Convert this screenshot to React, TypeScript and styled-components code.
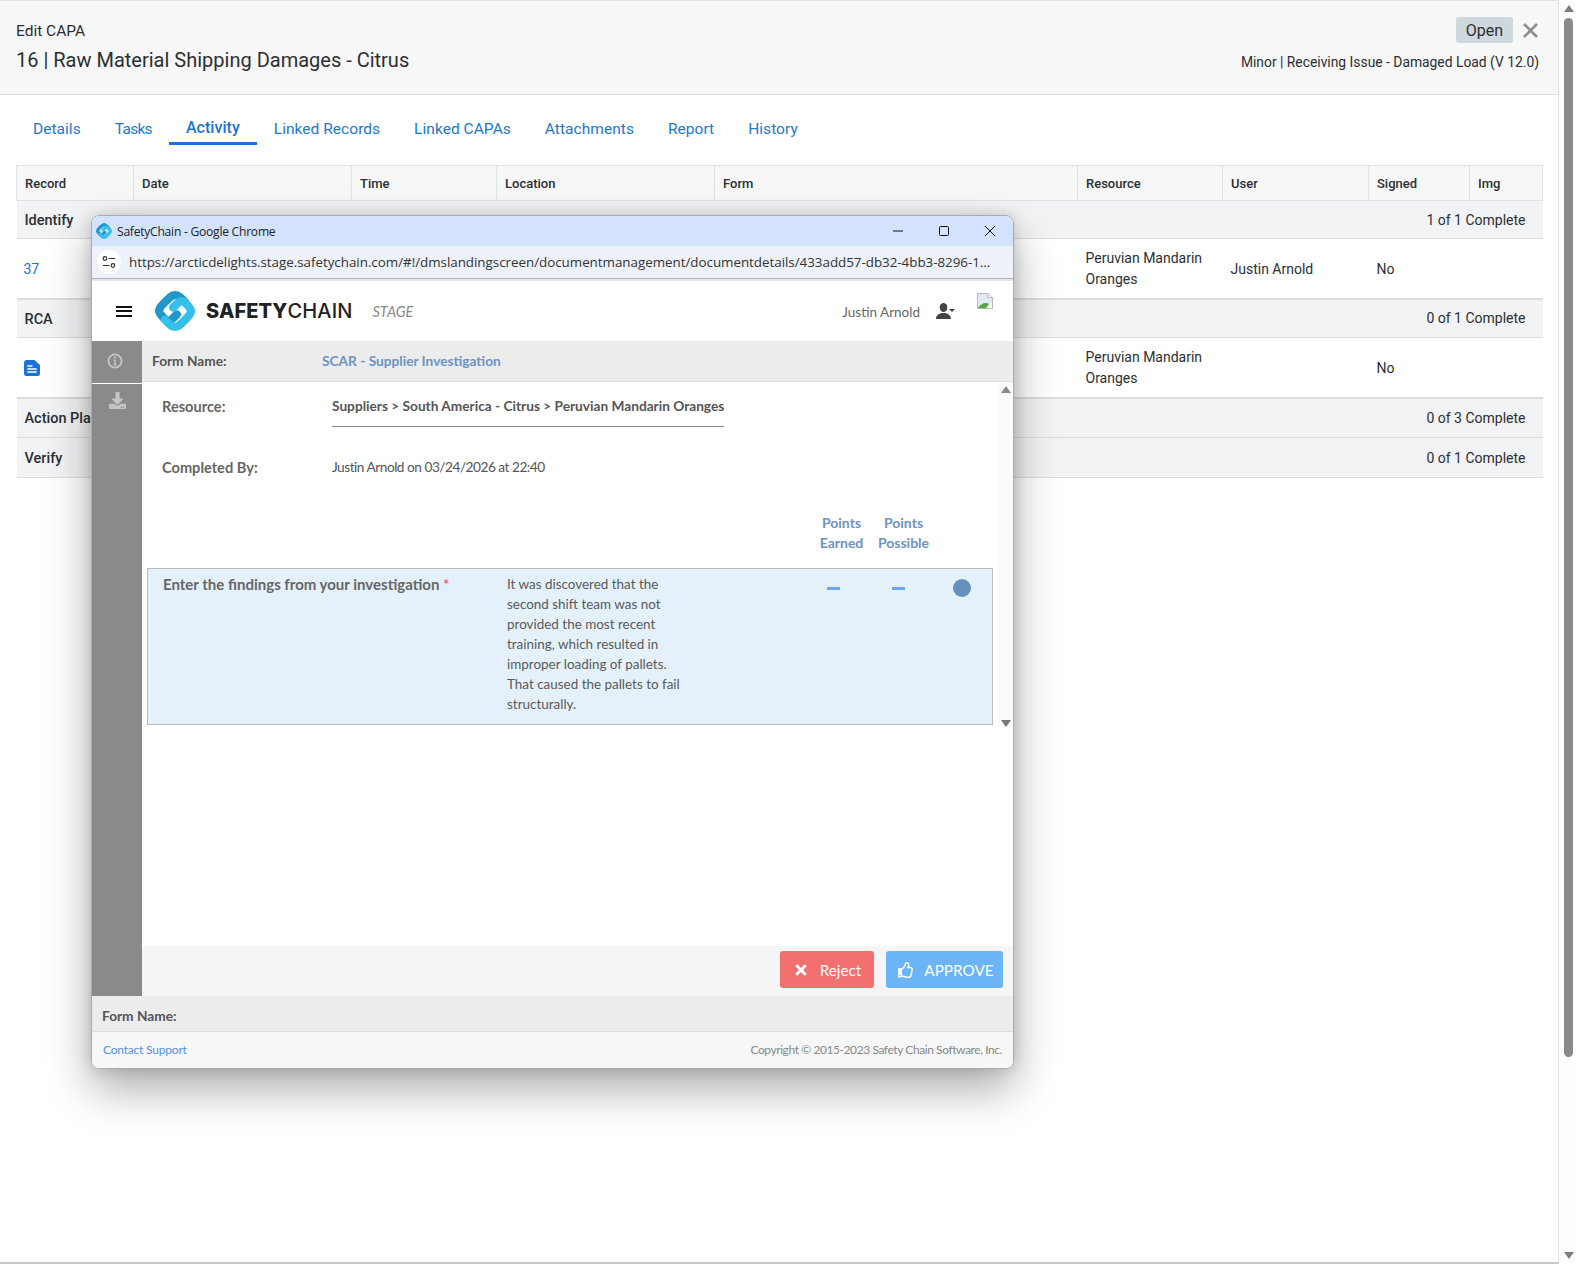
import React from "react";
import styled, { createGlobalStyle } from "styled-components";
import { FaDownload, FaRegThumbsUp, FaTimes } from "react-icons/fa";

const Global = createGlobalStyle`
  html, body { margin: 0; padding: 0; background: #fff; overflow: hidden; }
  body { font-family: Roboto, "Liberation Sans", sans-serif; color: #2b2f33; }
  * { box-sizing: border-box; }
`;

const Page = styled.div`
  display: flex;
  width: 1576px;
  height: 1264px;
  position: relative;
  overflow: hidden;
`;
const Main = styled.main`
  flex: 1;
  min-width: 0;
  border-right: 1px solid #e4e4e4;
  border-bottom: 2px solid #c9c9c9;
`;
const PageBar = styled.div`
  width: 17px;
  display: flex;
  flex-direction: column;
  align-items: center;
  background: #fdfdfd;
  padding: 5px 0 5px 2px;
`;
const Arrow = styled.div<{ $down?: boolean; $color?: string }>`
  width: 0;
  height: 0;
  border-left: 5px solid transparent;
  border-right: 5px solid transparent;
  ${(p) => (p.$down ? "border-top" : "border-bottom")}: 7px solid ${(p) => p.$color || "#7d7d7d"};
`;
const PageThumb = styled.div`
  width: 9px;
  height: 1039px;
  margin-top: 6px;
  margin-bottom: auto;
  background: #8a8a8a;
  border-radius: 5px;
`;
const Header = styled.header`
  height: 95px;
  background: #f7f7f7;
  border-top: 1px solid #e2e2e2;
  border-bottom: 1px solid #dedede;
  padding: 0 19px 0 16px;
  display: flex;
  justify-content: space-between;
`;
const HeadLeft = styled.div`
  display: flex;
  flex-direction: column;
  padding-top: 20px;
`;
const Eyebrow = styled.div`
  font-size: 15.5px;
  line-height: 20px;
`;
const Title = styled.h1`
  margin: 7px 0 0;
  font-size: 20px;
  line-height: 24px;
  font-weight: 400;
`;
const HeadRight = styled.div`
  display: flex;
  flex-direction: column;
  align-items: flex-end;
  padding-top: 16px;
`;
const StatusRow = styled.div`
  display: flex;
  align-items: center;
  gap: 10px;
`;
const Status = styled.span`
  width: 57px;
  height: 26px;
  background: #cfd8dd;
  border-radius: 3px;
  font-size: 16px;
  line-height: 27px;
  text-align: center;
`;
const CloseBtn = styled.span`
  display: flex;
  color: #8d8d8d;
  margin-right: 1px;
`;
const Meta = styled.div`
  margin-top: 9px;
  font-size: 13.85px;
  line-height: 20px;
`;
const Tabs = styled.nav`
  display: flex;
  padding: 23px 0 0 16px;
  height: 70px;
`;
const Tab = styled.a<{ $active?: boolean; $tight?: boolean }>`
  height: 27px;
  padding: 0 17px;
  font-size: ${(p) => (p.$active ? "16px" : "15.5px")};
  line-height: 22px;
  letter-spacing: ${(p) => (p.$tight ? "-0.7px" : "0.04px")};
  color: ${(p) => (p.$active ? "#1a73d4" : "#2378cc")};
  font-weight: ${(p) => (p.$active ? 500 : 400)};
  ${(p) => p.$active && "border-bottom: 3px solid #1a73d4; margin-top: -1px; height: 28px;"}
`;
const TableWrap = styled.div`
  padding-left: 16px;
`;
const Table = styled.table`
  width: 1526px;
  table-layout: fixed;
  border-collapse: collapse;
  font-size: 14px;
`;
const Th = styled.th`
  height: 35px;
  padding: 1px 8px 0;
  background: #f7f7f7;
  border: 1px solid #dee2e6;
  font-size: 13px;
  font-weight: 500;
  text-align: left;
`;
const GroupRow = styled.tr<{ $h: number }>`
  height: ${(p) => p.$h}px;
  background: #f2f3f5;
  border-bottom: 1px solid #dcdcdc;
`;
const GroupName = styled.td`
  padding: 2px 8px 0;
  font-weight: 500;
  font-size: 14.5px;
`;
const GroupCount = styled.td`
  padding: 0 17px 0 8px;
  text-align: right;
`;
const DataRow = styled.tr<{ $h: number }>`
  height: ${(p) => p.$h}px;
  border-bottom: 2px solid #dcdcdc;
`;
const Td = styled.td`
  padding: 2px 8px 0;
  line-height: 21px;
  vertical-align: middle;
`;
const RecordCell = styled(Td)`
  padding-left: 7px;
`;
const RecordLink = styled.a`
  color: #1a73d4;
`;

const Win = styled.section`
  position: absolute;
  left: 91px;
  top: 215px;
  width: 923px;
  height: 854px;
  display: flex;
  flex-direction: column;
  border: 1px solid #ababab;
  border-radius: 8px;
  overflow: hidden;
  background: #fff;
`;
const WinShadow = styled.div`
  position: absolute;
  left: 91px;
  top: 215px;
  width: 923px;
  height: 854px;
  border-radius: 8px;
  box-shadow: 0 20px 45px rgba(0, 0, 0, 0.33), 0 0 14px rgba(0, 0, 0, 0.14);
`;
const TitleBar = styled.div`
  height: 30px;
  flex: none;
  background: #d3e3fd;
  display: flex;
  align-items: center;
  padding: 0 18px 0 4px;
  font-size: 12.1px;
  font-family: "Open Sans", sans-serif;
  letter-spacing: -0.25px;
  color: #222;
`;
const TitleText = styled.span`
  margin-left: 5px;
  flex: 1;
`;
const WinControls = styled.div`
  display: flex;
  align-items: center;
  gap: 36px;
`;
const UrlBar = styled.div`
  height: 33px;
  flex: none;
  background: #edf2fa;
  border-bottom: 1px solid #b4b4b4;
  display: flex;
  align-items: center;
  padding: 0 0 0 5px;
  font-size: 13.4px;
  font-family: "Open Sans", sans-serif;
  letter-spacing: -0.03px;
  color: #333;
  white-space: nowrap;
`;
const SiteInfo = styled.span`
  width: 24px;
  height: 24px;
  flex: none;
  border-radius: 50%;
  background: #fff;
  display: flex;
  align-items: center;
  justify-content: center;
  margin-right: 8px;
`;
const UrlLine = styled.div`
  height: 2px;
  flex: none;
  background: #e3e5e8;
`;
const AppHeader = styled.div`
  height: 60px;
  flex: none;
  display: flex;
  align-items: center;
  padding: 0 20px 0 24px;
  background: #fff;
`;
const Burger = styled.span`
  width: 16px;
  height: 11px;
  border-top: 2px solid #111;
  border-bottom: 2px solid #111;
  position: relative;
  margin-right: 23px;
  &::after {
    content: "";
    position: absolute;
    left: 0;
    right: 0;
    top: 2.5px;
    height: 2px;
    background: #111;
  }
`;
const Brand = styled.span`
  margin-left: 11px;
  font-family: Inter, sans-serif;
  font-size: 20px;
  font-weight: 800;
  color: #222;
  letter-spacing: 0.13px;
`;
const BrandLight = styled.span`
  font-weight: 500;
`;
const Stage = styled.span`
  margin-left: 20px;
  font-family: Lato, sans-serif;
  font-style: italic;
  font-size: 14.5px;
  color: #8a8a8a;
  flex: 1;
`;
const UserName = styled.span`
  font-family: Lato, sans-serif;
  font-size: 13.5px;
  color: #666;
  margin: 2px 16px 0 0;
`;
const UserIcon = styled.span`
  display: flex;
  margin: 0 22px 0 0;
`;
const BrokenImg = styled.span`
  display: flex;
  align-self: flex-start;
  margin-top: 12px;
`;
const Body = styled.div`
  flex: 1;
  min-height: 0;
  display: flex;
  font-family: Lato, sans-serif;
  font-size: 13.7px;
  color: #555;
`;
const Side = styled.aside`
  width: 50px;
  flex: none;
  background: #8a8a8c;
  display: flex;
  flex-direction: column;
`;
const SideCell = styled.div<{ $line?: boolean }>`
  height: 43px;
  display: flex;
  justify-content: center;
  align-items: center;
  color: #c4c4c4;
  ${(p) => p.$line && "border-bottom: 1px solid #fff; padding: 0 4px 2px 0;"}
`;
const Content = styled.div`
  flex: 1;
  min-width: 0;
  display: flex;
  flex-direction: column;
`;
const FormRow = styled.div`
  height: 41px;
  flex: none;
  background: #ececec;
  border-bottom: 1px solid #dedede;
  display: flex;
  align-items: center;
  padding: 0 0 2px 10px;
  font-weight: 700;
`;
const FormLabel = styled.span`
  width: 170px;
  color: #555;
`;
const FormValue = styled.span`
  color: #6b93c3;
`;
const ScrollArea = styled.div`
  flex: 1;
  min-height: 0;
  display: flex;
  position: relative;
`;
const Scrolled = styled.div`
  flex: 1;
  min-width: 0;
  padding: 15px 0 0 5px;
`;
const ScrollRail = styled.div`
  width: 15px;
  height: 345px;
  flex: none;
  display: flex;
  flex-direction: column;
  justify-content: space-between;
  align-items: center;
  padding: 4px 0 0;
  background: #fbfbfb;
`;
const InfoRow = styled.div<{ $h: number }>`
  display: flex;
  height: ${(p) => p.$h}px;
  padding-left: 15px;
`;
const InfoLabel = styled.div`
  width: 170px;
  font-size: 14.6px;
  font-weight: 700;
  color: #666;
  line-height: 20px;
`;
const ResourceValue = styled.div`
  height: 30px;
  border-bottom: 1px solid #888;
  font-weight: 700;
  line-height: 18px;
`;
const PlainValue = styled.div`
  line-height: 18px;
  letter-spacing: -0.5px;
`;
const PointsHead = styled.div`
  display: flex;
  height: 55px;
  padding-left: 671px;
  gap: 15px;
`;
const PointsCol = styled.div`
  width: 47px;
  font-size: 14px;
  text-align: center;
  color: #6b93c3;
  font-weight: 700;
  line-height: 20px;
  white-space: nowrap;
  display: flex;
  justify-content: center;
`;
const Field = styled.div`
  width: 846px;
  height: 157px;
  background: #e4f1fb;
  border: 1px solid #bbb;
  display: flex;
  padding: 6px 0 0 15px;
`;
const FieldLabel = styled.div`
  width: 344px;
  margin-top: -1px;
  font-size: 15px;
  font-weight: 700;
  line-height: 20px;
  color: #666;
  white-space: nowrap;
`;
const Req = styled.span`
  color: #ee6b6b;
`;
const Answer = styled.div`
  width: 180px;
  margin-top: -1px;
  font-size: 13.45px;
  line-height: 20px;
  white-space: pre-line;
  color: #5a5a5a;
`;
const Dash = styled.span<{ $w: number }>`
  width: 13px;
  height: 3px;
  background: #6ca5f3;
  margin: 12px 0 0 ${(p) => p.$w}px;
`;
const Dot = styled.span`
  width: 18px;
  height: 18px;
  border-radius: 50%;
  background: #6690be;
  margin: 4px 0 0 48px;
`;
const Actions = styled.div`
  height: 50px;
  flex: none;
  background: #f5f5f5;
  display: flex;
  justify-content: flex-end;
  align-items: center;
  gap: 12px;
  padding: 0 10px 3px;
`;
const ActionBtn = styled.button<{ $bg: string; $w: number; $gap: number; $left: number }>`
  width: ${(p) => p.$w}px;
  height: 37px;
  border: 0;
  border-radius: 3px;
  background: ${(p) => p.$bg};
  color: #fff;
  font-family: Lato, sans-serif;
  font-size: 15.3px;
  display: flex;
  align-items: center;
  justify-content: center;
  gap: ${(p) => p.$gap}px;
  padding: 0 0 0 ${(p) => p.$left}px;
`;
const FormStrip = styled.div`
  height: 36px;
  flex: none;
  background: #ececec;
  border-bottom: 1px solid #dedede;
  font-family: Lato, sans-serif;
  font-size: 13.7px;
  font-weight: 700;
  color: #555;
  line-height: 40px;
  padding-left: 10px;
`;
const Foot = styled.footer`
  height: 36px;
  flex: none;
  background: #f6f8f8;
  display: flex;
  justify-content: space-between;
  align-items: center;
  padding: 0 11px 1px;
  font-family: Lato, sans-serif;
  font-size: 12px;
  color: #888;
`;
const FootLink = styled.a`
  color: #5a8ee6;
  letter-spacing: -0.2px;
`;
const Copyright = styled.span`
  letter-spacing: -0.42px;
`;

const Logo = ({ size }: { size: number }) => (
  <svg width={size} height={size} viewBox="3 3 34 34" fill="none" strokeLinejoin="round" strokeLinecap="round">
    <path d="M28.500 12.500 C24 8 22.500 6.500 20 6.500 C17.500 6.500 16 8 13 11 L10 14 C7 17 6.500 18 6.500 20 C6.500 22 8 23.500 10.500 26 C13 28.500 15.500 29 18 26.500 L21.500 23" stroke="#2196c9" strokeWidth="7" />
    <path d="M11.500 27.500 C16 32 17.500 33.500 20 33.500 C22.500 33.500 24 32 27 29 L30 26 C33 23 33.500 22 33.500 20 C33.500 18 32 16.500 29.500 14 C27 11.500 24.500 11 22 13.500 L18.500 17" stroke="#35c0ea" strokeWidth="7" />
  </svg>
);

const cols = [117, 218, 145, 218, 363, 145, 146, 101, 73];
const heads = ["Record", "Date", "Time", "Location", "Form", "Resource", "User", "Signed", "Img"];

export default function App() {
  return (
    <Page>
      <Global />
      <Main>
        <Header>
          <HeadLeft>
            <Eyebrow>Edit CAPA</Eyebrow>
            <Title>16 | Raw Material Shipping Damages - Citrus</Title>
          </HeadLeft>
          <HeadRight>
            <StatusRow>
              <Status>Open</Status>
              <CloseBtn>
                <svg width="15" height="15" viewBox="0 0 15 15">
                  <path d="M1 1L14 14M14 1L1 14" stroke="#8d8d8d" strokeWidth="2.6" />
                </svg>
              </CloseBtn>
            </StatusRow>
            <Meta>Minor | Receiving Issue - Damaged Load (V 12.0)</Meta>
          </HeadRight>
        </Header>
        <Tabs>
          <Tab>Details</Tab>
          <Tab $tight>Tasks</Tab>
          <Tab $active>Activity</Tab>
          <Tab>Linked Records</Tab>
          <Tab>Linked CAPAs</Tab>
          <Tab>Attachments</Tab>
          <Tab>Report</Tab>
          <Tab>History</Tab>
        </Tabs>
        <TableWrap>
          <Table>
            <colgroup>
              {cols.map((w, i) => (
                <col key={i} style={{ width: w }} />
              ))}
            </colgroup>
            <thead>
              <tr>
                {heads.map((h) => (
                  <Th key={h}>{h}</Th>
                ))}
              </tr>
            </thead>
            <tbody>
              <GroupRow $h={38}>
                <GroupName colSpan={5}>Identify</GroupName>
                <GroupCount colSpan={4}>1 of 1 Complete</GroupCount>
              </GroupRow>
              <DataRow $h={60}>
                <RecordCell><RecordLink>37</RecordLink></RecordCell>
                <Td colSpan={4} />
                <Td>Peruvian Mandarin Oranges</Td>
                <Td>Justin Arnold</Td>
                <Td>No</Td>
                <Td />
              </DataRow>
              <GroupRow $h={39}>
                <GroupName colSpan={5}>RCA</GroupName>
                <GroupCount colSpan={4}>0 of 1 Complete</GroupCount>
              </GroupRow>
              <DataRow $h={60}>
                <RecordCell>
                  <svg width="16" height="16" viewBox="0 0 17 16" preserveAspectRatio="none" style={{ display: "block" }}>
                    <path d="M2.5 0H11L17 5V13.5A2.5 2.5 0 0 1 14.500 16H2.500A2.500 2.500 0 0 1 0 13.500V2.500A2.500 2.500 0 0 1 2.500 0Z" fill="#1a73d8" />
                    <path d="M3.500 6H9M3.500 9H13.500M3.500 12H13.500" stroke="#fff" strokeWidth="1.500" />
                  </svg>
                </RecordCell>
                <Td colSpan={4} />
                <Td>Peruvian Mandarin Oranges</Td>
                <Td />
                <Td>No</Td>
                <Td />
              </DataRow>
              <GroupRow $h={40}>
                <GroupName colSpan={5}>Action Plan</GroupName>
                <GroupCount colSpan={4}>0 of 3 Complete</GroupCount>
              </GroupRow>
              <GroupRow $h={40}>
                <GroupName colSpan={5}>Verify</GroupName>
                <GroupCount colSpan={4}>0 of 1 Complete</GroupCount>
              </GroupRow>
            </tbody>
          </Table>
        </TableWrap>
      </Main>
      <PageBar>
        <Arrow />
        <PageThumb />
        <Arrow $down />
      </PageBar>

      <WinShadow />
      <Win>
        <TitleBar>
          <Logo size={16} />
          <TitleText>SafetyChain - Google Chrome</TitleText>
          <WinControls>
            <svg width="10" height="10" viewBox="0 0 10 10"><path d="M0 5H10" stroke="#111" /></svg>
            <svg width="10" height="10" viewBox="0 0 10 10"><rect x="0.500" y="0.500" width="9" height="9" rx="1" fill="none" stroke="#111" /></svg>
            <svg width="10" height="10" viewBox="0 0 10 10"><path d="M0 0L10 10M10 0L0 10" stroke="#111" /></svg>
          </WinControls>
        </TitleBar>
        <UrlBar>
          <SiteInfo>
            <svg width="14" height="14" viewBox="0 0 14 14" fill="none" stroke="#333" strokeWidth="1.200">
              <circle cx="3" cy="3.500" r="1.800" />
              <path d="M6.500 3.500H13M1 10.500H7.500" />
              <circle cx="11" cy="10.500" r="1.800" />
            </svg>
          </SiteInfo>
          https://arcticdelights.stage.safetychain.com/#!/dmslandingscreen/documentmanagement/documentdetails/433add57-db32-4bb3-8296-1...
        </UrlBar>
        <UrlLine />
        <AppHeader>
          <Burger />
          <Logo size={40} />
          <Brand>SAFETY<BrandLight>CHAIN</BrandLight></Brand>
          <Stage>STAGE</Stage>
          <UserName>Justin Arnold</UserName>
          <UserIcon>
            <svg width="19" height="16" viewBox="0 0 19 16" fill="#444">
              <ellipse cx="7.500" cy="4.500" rx="3.800" ry="4.500" />
              <path d="M0 16C0 12 3 11 5.500 10H9.500C12 11 15 12 15 16Z" />
              <path d="M13 6H19L16 9Z" />
            </svg>
          </UserIcon>
          <BrokenImg>
            <svg width="16" height="16" viewBox="0 0 16 16">
              <path d="M0.500 0.500H11L15.500 4.500V15.500H0.500Z" fill="#dfe9f7" stroke="#b7b7b7" />
              <path d="M11 0.500V4.500H15.500" fill="#fff" stroke="#b7b7b7" />
              <path d="M1 15C4 10 9 9 12 11L9 15Z" fill="#5aa83e" />
              <path d="M12 12L15 9V15H10Z" fill="#fff" />
            </svg>
          </BrokenImg>
        </AppHeader>
        <Body>
          <Side>
            <SideCell $line>
              <svg width="16" height="16" viewBox="0 0 17 17" fill="none">
                <circle cx="8.500" cy="8.500" r="7" stroke="#c4c4c4" strokeWidth="2" />
                <path d="M8.500 7.500V12.500M7 12.500H10M7.200 7.500H8.500" stroke="#c4c4c4" strokeWidth="1.800" />
                <circle cx="8.500" cy="4.800" r="1.200" fill="#c4c4c4" />
              </svg>
            </SideCell>
            <SideCell>
              <FaDownload size={17} style={{ marginTop: -10 }} />
            </SideCell>
          </Side>
          <Content>
            <FormRow>
              <FormLabel>Form Name:</FormLabel>
              <FormValue>SCAR - Supplier Investigation</FormValue>
            </FormRow>
            <ScrollArea>
              <Scrolled>
                <InfoRow $h={61}>
                  <InfoLabel>Resource:</InfoLabel>
                  <ResourceValue>Suppliers &gt; South America - Citrus &gt; Peruvian Mandarin Oranges</ResourceValue>
                </InfoRow>
                <InfoRow $h={55}>
                  <InfoLabel>Completed By:</InfoLabel>
                  <PlainValue>Justin Arnold on 03/24/2026 at 22:40</PlainValue>
                </InfoRow>
                <PointsHead>
                  <PointsCol>Points<br />Earned</PointsCol>
                  <PointsCol>Points<br />Possible</PointsCol>
                </PointsHead>
                <Field>
                  <FieldLabel>Enter the findings from your investigation <Req>*</Req></FieldLabel>
                  <Answer>{"It was discovered that the\nsecond shift team was not\nprovided the most recent\ntraining, which resulted in\nimproper loading of pallets.\nThat caused the pallets to fail\nstructurally."}</Answer>
                  <Dash $w={140} />
                  <Dash $w={52} />
                  <Dot />
                </Field>
              </Scrolled>
              <ScrollRail>
                <Arrow $color="#8a8a8a" />
                <Arrow $down $color="#777" />
              </ScrollRail>
            </ScrollArea>
            <Actions>
              <ActionBtn $bg="#f37070" $w={94} $gap={11} $left={0}>
                <FaTimes size={16} />
                Reject
              </ActionBtn>
              <ActionBtn $bg="#6bb4f5" $w={117} $gap={10} $left={3}>
                <FaRegThumbsUp size={16} />
                APPROVE
              </ActionBtn>
            </Actions>
          </Content>
        </Body>
        <FormStrip>Form Name:</FormStrip>
        <Foot>
          <FootLink>Contact Support</FootLink>
          <Copyright>Copyright © 2015-2023 Safety Chain Software, Inc.</Copyright>
        </Foot>
      </Win>
    </Page>
  );
}
